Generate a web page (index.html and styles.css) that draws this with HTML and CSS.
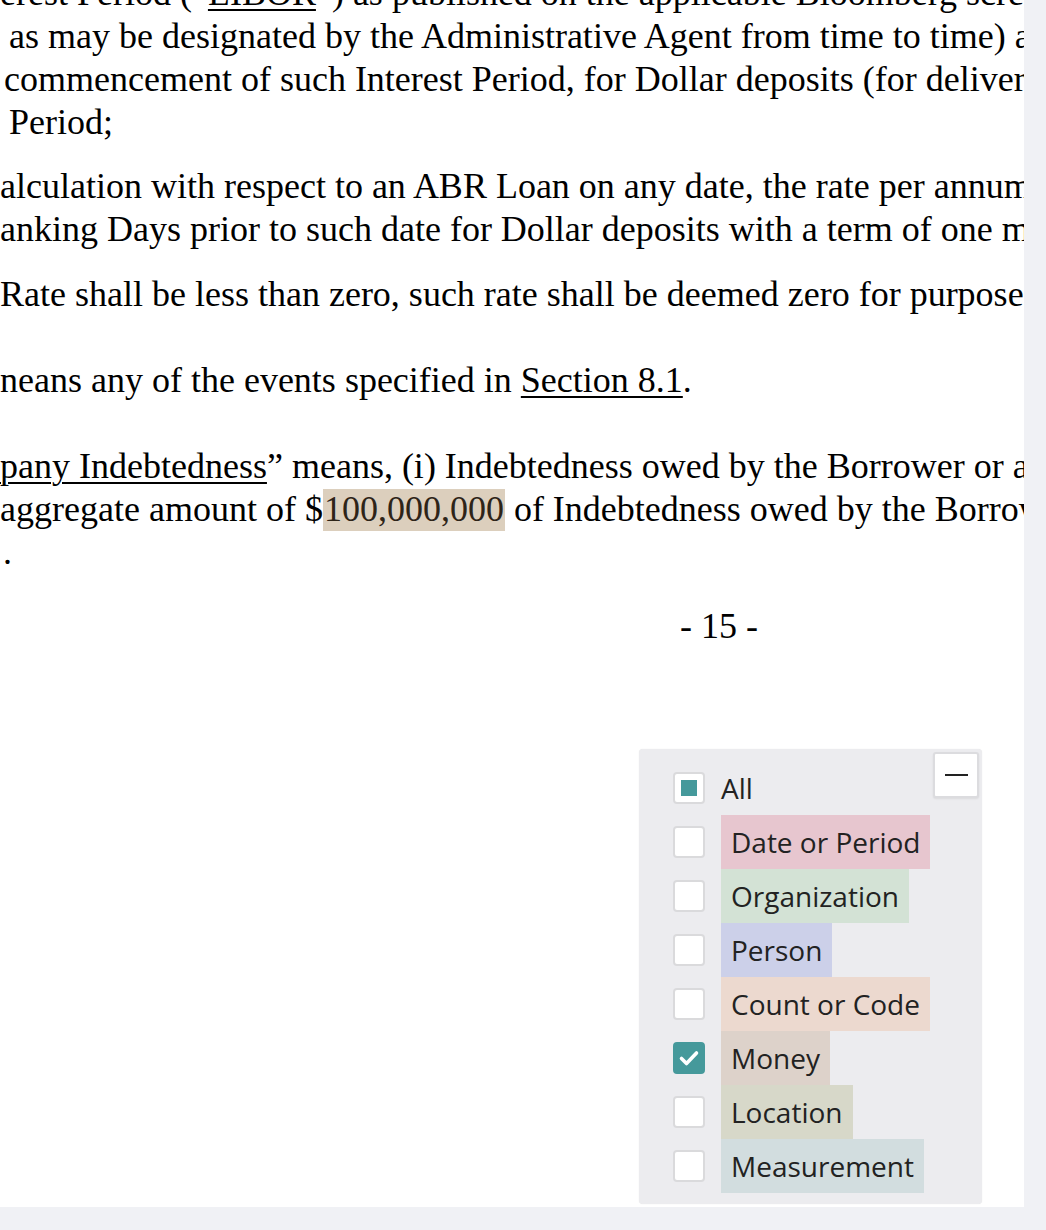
FILE: index.html
```html
<!DOCTYPE html>
<html>
<head>
<meta charset="utf-8">
<link rel="stylesheet" href="styles.css">
</head>
<body>
<div class="page">
  <div class="doc">
    <div class="para p1">
      <div class="ln">erest Period (“<u>LIBOR</u>”) as published on the applicable Bloomberg screen</div>
      <div class="ln i9">as may be designated by the Administrative Agent from time to time) and</div>
      <div class="ln i4">commencement of such Interest Period, for Dollar deposits (for delivery</div>
      <div class="ln i9">Period;</div>
    </div>
    <div class="para p2">
      <div class="ln">alculation with respect to an ABR Loan on any date, the rate per annum</div>
      <div class="ln">anking Days prior to such date for Dollar deposits with a term of one month</div>
    </div>
    <div class="para p3">
      <div class="ln">Rate shall be less than zero, such rate shall be deemed zero for purposes</div>
    </div>
    <div class="para p4">
      <div class="ln">neans any of the events specified in <u>Section 8.1</u>.</div>
    </div>
    <div class="para p5">
      <div class="ln"><u>pany Indebtedness</u>” means, (i) Indebtedness owed by the Borrower or any</div>
      <div class="ln">aggregate amount of $<span class="hl">100,000,000</span> of Indebtedness owed by the Borrower</div>
      <div class="ln i2">.</div>
    </div>
    <div class="pagenum">- 15 -</div>
  </div>
</div>

<div class="legend">
  <button class="minimize" aria-label="Minimize"><span class="dash"></span></button>
  <div class="row">
    <span class="cb partial"><span class="sq"></span></span>
    <span class="lbl plain">All</span>
  </div>
  <div class="row">
    <span class="cb"></span>
    <span class="lbl c-date">Date or Period</span>
  </div>
  <div class="row">
    <span class="cb"></span>
    <span class="lbl c-org">Organization</span>
  </div>
  <div class="row">
    <span class="cb"></span>
    <span class="lbl c-person">Person</span>
  </div>
  <div class="row">
    <span class="cb"></span>
    <span class="lbl c-count">Count or Code</span>
  </div>
  <div class="row">
    <span class="cb checked">
      <svg viewBox="0 0 32 32" width="32" height="32"><path d="M8.5 16.5 L13.5 21.5 L23.5 11" fill="none" stroke="#fff" stroke-width="3.6" stroke-linecap="round" stroke-linejoin="round"/></svg>
    </span>
    <span class="lbl c-money">Money</span>
  </div>
  <div class="row">
    <span class="cb"></span>
    <span class="lbl c-loc">Location</span>
  </div>
  <div class="row">
    <span class="cb"></span>
    <span class="lbl c-meas">Measurement</span>
  </div>
</div>
</body>
</html>
```

FILE: styles.css
```css
html, body {
  margin: 0;
  padding: 0;
}
body {
  background: #f0f1f5;
  width: 1046px;
  height: 1230px;
  overflow: hidden;
  position: relative;
}
.page {
  width: 1024px;
  height: 1207px;
  background: #ffffff;
  overflow: hidden;
}
.doc {
  font-family: "Liberation Serif", "Times New Roman", serif;
  font-size: 36px;
  line-height: 43px;
  color: #000;
  margin-top: -28px;
}
.ln {
  white-space: nowrap;
}
.ln u {
  text-decoration: underline;
  text-decoration-thickness: 2px;
  text-underline-offset: 4px;
}
.i9 { padding-left: 9px; }
.i4 { padding-left: 4px; }
.i2 { padding-left: 3px; }
.p2 { margin-top: 21px; }
.p3 { margin-top: 22px; }
.p4 { margin-top: 43px; }
.p5 { margin-top: 43px; }
.hl {
  background: #dccfbd;
  color: #2e2418;
  padding: 0 1px 2px;
}
.pagenum {
  margin-top: 31px;
  padding-left: 680px;
  white-space: nowrap;
}

.legend {
  position: absolute;
  left: 639px;
  top: 749px;
  width: 343px;
  height: 455px;
  box-sizing: border-box;
  padding: 12px 0 11px 34px;
  background: #ececef;
  border-radius: 4px;
  box-shadow: 0 0 1px rgba(0,0,0,0.12);
  font-family: "Open Sans", "Noto Sans", sans-serif;
  font-size: 28px;
  color: #222;
}
.minimize {
  position: absolute;
  top: 3px;
  right: 3px;
  width: 46px;
  height: 46px;
  box-sizing: border-box;
  background: #fff;
  border: 2px solid #dcdcdf;
  border-radius: 3px;
  padding: 0;
  display: flex;
  align-items: center;
  justify-content: center;
  box-shadow: 0 1px 2px rgba(0,0,0,0.08);
}
.dash {
  display: block;
  width: 23px;
  height: 2px;
  background: #222;
}
.row {
  height: 54px;
  display: flex;
  align-items: center;
  gap: 16px;
}
.cb {
  width: 32px;
  height: 32px;
  box-sizing: border-box;
  border: 2px solid #dadadc;
  border-radius: 4px;
  background: #fff;
  display: flex;
  align-items: center;
  justify-content: center;
  flex: none;
}
.cb .sq {
  width: 16px;
  height: 16px;
  background: #45999b;
}
.cb.checked {
  background: #45999b;
  border-color: #45999b;
}
.cb.checked svg {
  display: block;
  flex: none;
}
.lbl {
  height: 54px;
  line-height: 54px;
  padding: 0 10px;
  white-space: nowrap;
}
.lbl.plain {
  padding: 0;
}
.c-date { background: #e7c6cf; }
.c-org { background: #d3e2d5; }
.c-person { background: #ccd0e9; }
.c-count { background: #ecd9cf; }
.c-money { background: #ddd2ca; }
.c-loc { background: #d7d8c9; }
.c-meas { background: #d2dddf; }
```
